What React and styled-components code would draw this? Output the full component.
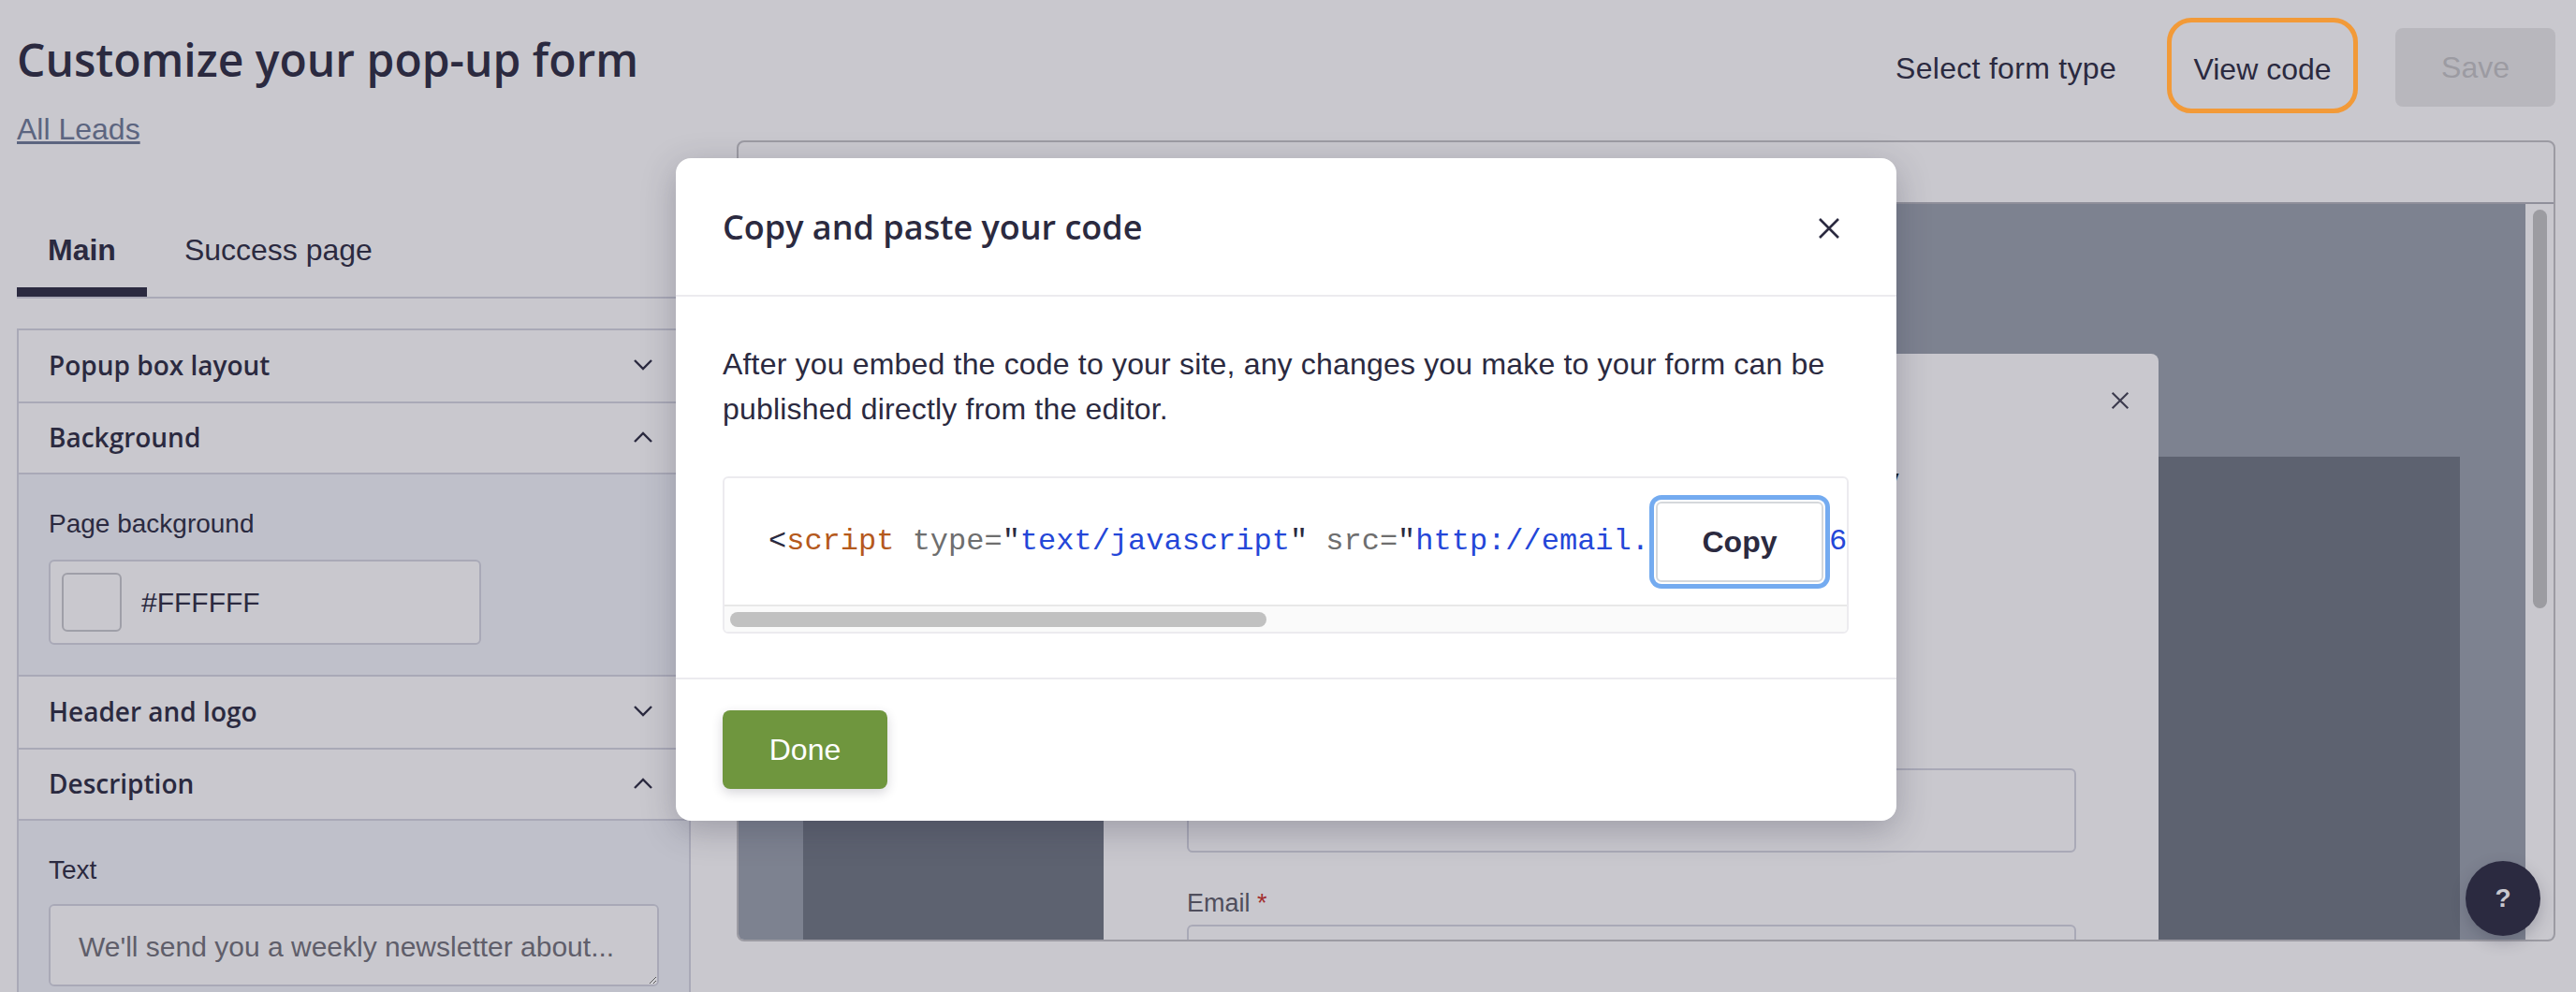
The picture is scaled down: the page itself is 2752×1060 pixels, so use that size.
import styled, { createGlobalStyle } from "styled-components";

const GlobalStyle = createGlobalStyle`
  html, body {
    margin: 0;
    background: #c9c8ce;
  }
  * {
    box-sizing: border-box;
  }
`;

const Page = styled.div`
  position: relative;
  display: grid;
  grid-template-columns: 720px 1943px;
  column-gap: 49px;
  width: 2752px;
  height: 1060px;
  padding-left: 18px;
  overflow: hidden;
  background: #c9c8ce;
  color: #2b2a40;
  font-family: "Liberation Sans", Arial, sans-serif;
`;

const LeftColumn = styled.section`
  display: flex;
  flex-direction: column;
`;

const Title = styled.h1`
  margin: 32px 0 0;
  font-family: "Open Sans", sans-serif;
  font-size: 48px;
  font-weight: 600;
  line-height: 64px;
`;

const BackLink = styled.a`
  margin-top: 22px;
  width: max-content;
  color: #5c6580;
  font-size: 32px;
  line-height: 40px;
  text-decoration: underline;
`;

const Tabs = styled.div`
  display: flex;
  gap: 7px;
  margin-top: 67px;
  height: 94px;
  border-bottom: 2px solid #a9a9b7;
`;

const Tab = styled.div`
  display: flex;
  align-items: center;
  height: 92px;
  padding: 2px 33px 0;
  font-size: 32px;
  font-weight: ${(p) => (p.$active ? 700 : 400)};
  border-bottom: 10px solid ${(p) => (p.$active ? "#2b2a40" : "transparent")};
`;

const Accordion = styled.div`
  margin-top: 32px;
  border: 2px solid #a9a9b7;
  border-bottom: 0;
`;

const SectionHeader = styled.div`
  display: flex;
  align-items: center;
  justify-content: space-between;
  height: ${(p) => (p.$open ? 76 : 78)}px;
  padding: 0 38px 2px 32px;
  border-bottom: 2px solid #a9a9b7;
  font-family: "Open Sans", sans-serif;
  font-size: 28px;
  font-weight: 600;
`;

const SectionPanel = styled.div`
  display: flex;
  flex-direction: column;
  padding: 35px 32px 32px;
  background: #bfc0ca;
  border-bottom: 2px solid #a9a9b7;
`;

const FieldLabel = styled.label`
  font-size: 28px;
  line-height: 36px;
`;

const ColorField = styled.div`
  display: flex;
  align-items: center;
  gap: 21px;
  width: 462px;
  height: 91px;
  margin-top: 20px;
  padding-left: 12px;
  background: #c9c8ce;
  border: 2px solid #a9a9b7;
  border-radius: 6px;
  font-size: 30px;
`;

const Swatch = styled.span`
  width: 64px;
  height: 63px;
  border: 2px solid #9f9fa8;
  border-radius: 6px;
`;

const TextArea = styled.textarea`
  display: block;
  width: 652px;
  height: 88px;
  margin-top: 18px;
  padding: 27px 30px;
  background: #c9c8ce;
  border: 2px solid #a9a9b7;
  border-radius: 6px;
  color: #2b2a40;
  font-family: "Liberation Sans", Arial, sans-serif;
  font-size: 30px;

  &::placeholder {
    color: #5f5e6a;
    opacity: 1;
  }
`;

const RightColumn = styled.section`
  display: flex;
  flex-direction: column;
  padding-top: 19px;
`;

const Actions = styled.div`
  display: flex;
  justify-content: flex-end;
  align-items: center;
  gap: 40px;
  height: 102px;
  margin-bottom: 29px;
  font-size: 32px;
`;

const FormTypeButton = styled.div`
  margin-right: 14px;
  padding-top: 6px;
  letter-spacing: 0.3px;
`;

const ViewCodeButton = styled.div`
  display: flex;
  align-items: center;
  justify-content: center;
  width: 204px;
  height: 102px;
  padding-top: 8px;
  border: 5px solid #f29a38;
  border-radius: 26px;
`;

const SaveButton = styled.div`
  display: flex;
  align-items: center;
  justify-content: center;
  width: 171px;
  height: 84px;
  margin-top: 4px;
  background: #b8b7bd;
  border-radius: 8px;
  color: #9c9ba2;
`;

const Preview = styled.div`
  display: flex;
  flex-direction: column;
  height: 856px;
  overflow: hidden;
  border: 2px solid #9c9ba3;
  border-radius: 8px;
`;

const PreviewBar = styled.div`
  flex: none;
  height: 66px;
  border-bottom: 2px solid #8f8f9a;
`;

const PreviewBody = styled.div`
  display: flex;
  flex: 1;
  min-height: 0;
  background: #7d8290;
`;

const PreviewCanvas = styled.div`
  flex: 1;
  min-width: 0;
  padding: 270px 70px 0 69px;
`;

const Banner = styled.div`
  display: flex;
  align-items: flex-start;
  height: 100%;
  padding-left: 321px;
  background: #5d6270;
`;

const FormCard = styled.div`
  flex: none;
  width: 1127px;
  height: 627px;
  margin-top: -110px;
  padding: 40px 31px 0 89px;
  background: #c9c8ce;
  border-radius: 8px 8px 0 0;
  overflow: hidden;
`;

const CardClose = styled.div`
  display: flex;
  justify-content: flex-end;
  color: #3c3b4e;
`;

const CardHeading = styled.h2`
  margin: 54px 0 0;
  padding-left: 644px;
  color: #111;
  font-size: 34px;
  font-weight: 700;
  line-height: 40px;
  height: 329px;
`;

const CardInput = styled.div`
  width: 950px;
  height: 90px;
  border: 2px solid #a9a9b7;
  border-radius: 6px;
`;

const CardLabel = styled.div`
  margin: 38px 0 7px;
  color: #4f4e5c;
  font-size: 27px;
  line-height: 32px;
`;

const Required = styled.span`
  color: #a33030;
`;

const ScrollTrack = styled.div`
  flex: none;
  width: 30px;
  padding: 6px 7px 0 8px;
  background: #c9c8ce;
`;

const ScrollThumb = styled.div`
  height: 426px;
  background: #9c9ca1;
  border-radius: 8px;
`;

const HelpButton = styled.div`
  position: absolute;
  left: 2634px;
  top: 920px;
  display: flex;
  align-items: center;
  justify-content: center;
  width: 80px;
  height: 80px;
  background: #2b2a40;
  border-radius: 50%;
  box-shadow: 0 6px 16px rgba(43, 42, 64, 0.25);
  color: #c9c8ce;
  font-size: 28px;
  font-weight: 700;
`;

const Modal = styled.div`
  position: absolute;
  left: 722px;
  top: 169px;
  display: flex;
  flex-direction: column;
  width: 1304px;
  height: 708px;
  background: #fff;
  border-radius: 16px;
  box-shadow: 0 10px 36px rgba(43, 42, 64, 0.28);
`;

const ModalHeader = styled.header`
  display: flex;
  align-items: center;
  justify-content: space-between;
  height: 148px;
  padding: 0 60px 0 50px;
  border-bottom: 2px solid #ecebef;
`;

const ModalTitle = styled.h2`
  margin: 0;
  font-family: "Open Sans", sans-serif;
  font-size: 36px;
  font-weight: 600;
`;

const ModalClose = styled.div`
  display: flex;
  margin-top: 4px;
`;

const ModalBody = styled.div`
  flex: none;
  height: 409px;
  padding: 48px 50px 0;
  border-bottom: 2px solid #ecebef;
`;

const ModalText = styled.p`
  margin: 0;
  font-size: 32px;
  line-height: 48px;
  letter-spacing: 0.18px;
`;

const CodeBox = styled.div`
  position: relative;
  width: 1203px;
  height: 168px;
  margin-top: 48px;
  border: 2px solid #ecebef;
  border-radius: 6px;
  overflow: hidden;
`;

const CodeLine = styled.pre`
  display: flex;
  align-items: center;
  height: 135px;
  margin: 0;
  padding: 0 0 0 47px;
  overflow: hidden;
  font-family: "Liberation Mono", "Courier New", monospace;
  font-size: 32px;
  white-space: pre;
`;

const CodeToken = styled.span`
  color: ${(p) => p.$color};
`;

const CodeScrollbar = styled.div`
  height: 29px;
  padding: 6px 6px 0;
  background: #fafafa;
  border-top: 2px solid #e8e8e8;
`;

const CodeThumb = styled.div`
  width: 573px;
  height: 16px;
  background: #c1c1c1;
  border-radius: 8px;
`;

const CopyButton = styled.button`
  position: absolute;
  top: 25px;
  right: 25px;
  width: 179px;
  height: 86px;
  background: #fff;
  border: 2px solid #d5d8dc;
  border-radius: 6px;
  box-shadow: 0 0 0 2px #fff, 0 0 0 7px #74abf0;
  color: #2b2a40;
  font-family: "Liberation Sans", Arial, sans-serif;
  font-size: 32px;
  font-weight: 700;
`;

const ModalFooter = styled.footer`
  padding: 33px 50px;
`;

const DoneButton = styled.button`
  width: 176px;
  height: 84px;
  background: #6f963e;
  border: 0;
  border-radius: 8px;
  box-shadow: 0 4px 12px rgba(43, 42, 64, 0.2);
  color: #fff;
  font-family: "Liberation Sans", Arial, sans-serif;
  font-size: 32px;
`;

const Chevron = ({ up }) => (
  <svg width="22" height="14" viewBox="0 0 22 14" fill="none">
    <path
      d={up ? "M2 12 L11 3 L20 12" : "M2 2 L11 11 L20 2"}
      stroke="#2b2a40"
      strokeWidth="2.4"
    />
  </svg>
);

const CloseIcon = ({ size }) => (
  <svg width={size} height={size} viewBox="0 0 24 24" fill="none">
    <path d="M2 2 L22 22 M22 2 L2 22" stroke="currentColor" strokeWidth="2.6" />
  </svg>
);

const App = () => {
  return (
    <Page>
      <GlobalStyle />
      <LeftColumn>
        <Title>Customize your pop-up form</Title>
        <BackLink>All Leads</BackLink>
        <Tabs>
          <Tab $active>Main</Tab>
          <Tab>Success page</Tab>
        </Tabs>
        <Accordion>
          <SectionHeader>
            Popup box layout
            <Chevron />
          </SectionHeader>
          <SectionHeader $open>
            Background
            <Chevron up />
          </SectionHeader>
          <SectionPanel>
            <FieldLabel>Page background</FieldLabel>
            <ColorField>
              <Swatch />
              #FFFFFF
            </ColorField>
          </SectionPanel>
          <SectionHeader>
            Header and logo
            <Chevron />
          </SectionHeader>
          <SectionHeader $open>
            Description
            <Chevron up />
          </SectionHeader>
          <SectionPanel>
            <FieldLabel>Text</FieldLabel>
            <TextArea placeholder="We'll send you a weekly newsletter about..." />
          </SectionPanel>
        </Accordion>
      </LeftColumn>

      <RightColumn>
        <Actions>
          <FormTypeButton>Select form type</FormTypeButton>
          <ViewCodeButton>View code</ViewCodeButton>
          <SaveButton>Save</SaveButton>
        </Actions>
        <Preview>
          <PreviewBar />
          <PreviewBody>
            <PreviewCanvas>
              <Banner>
                <FormCard>
                  <CardClose>
                    <CloseIcon size={20} />
                  </CardClose>
                  <CardHeading>Weekly</CardHeading>
                  <CardInput />
                  <CardLabel>
                    Email <Required>*</Required>
                  </CardLabel>
                  <CardInput />
                </FormCard>
              </Banner>
            </PreviewCanvas>
            <ScrollTrack>
              <ScrollThumb />
            </ScrollTrack>
          </PreviewBody>
        </Preview>
      </RightColumn>

      <HelpButton>?</HelpButton>

      <Modal>
        <ModalHeader>
          <ModalTitle>Copy and paste your code</ModalTitle>
          <ModalClose>
            <CloseIcon size={24} />
          </ModalClose>
        </ModalHeader>
        <ModalBody>
          <ModalText>
            After you embed the code to your site, any changes you make to your form can be
            <br />
            published directly from the editor.
          </ModalText>
          <CodeBox>
            <CodeLine>
              <CodeToken $color="#2b2a40">&lt;</CodeToken>
              <CodeToken $color="#b5591c">script</CodeToken>
              <CodeToken $color="#6e6e6e"> type=</CodeToken>
              <CodeToken $color="#2b2a40">"</CodeToken>
              <CodeToken $color="#2447d8">text/javascript</CodeToken>
              <CodeToken $color="#2b2a40">"</CodeToken>
              <CodeToken $color="#6e6e6e"> src=</CodeToken>
              <CodeToken $color="#2b2a40">"</CodeToken>
              <CodeToken $color="#2447d8">http://email.leads.com/6f.js</CodeToken>
            </CodeLine>
            <CodeScrollbar>
              <CodeThumb />
            </CodeScrollbar>
            <CopyButton>Copy</CopyButton>
          </CodeBox>
        </ModalBody>
        <ModalFooter>
          <DoneButton>Done</DoneButton>
        </ModalFooter>
      </Modal>
    </Page>
  );
};

export default App;
